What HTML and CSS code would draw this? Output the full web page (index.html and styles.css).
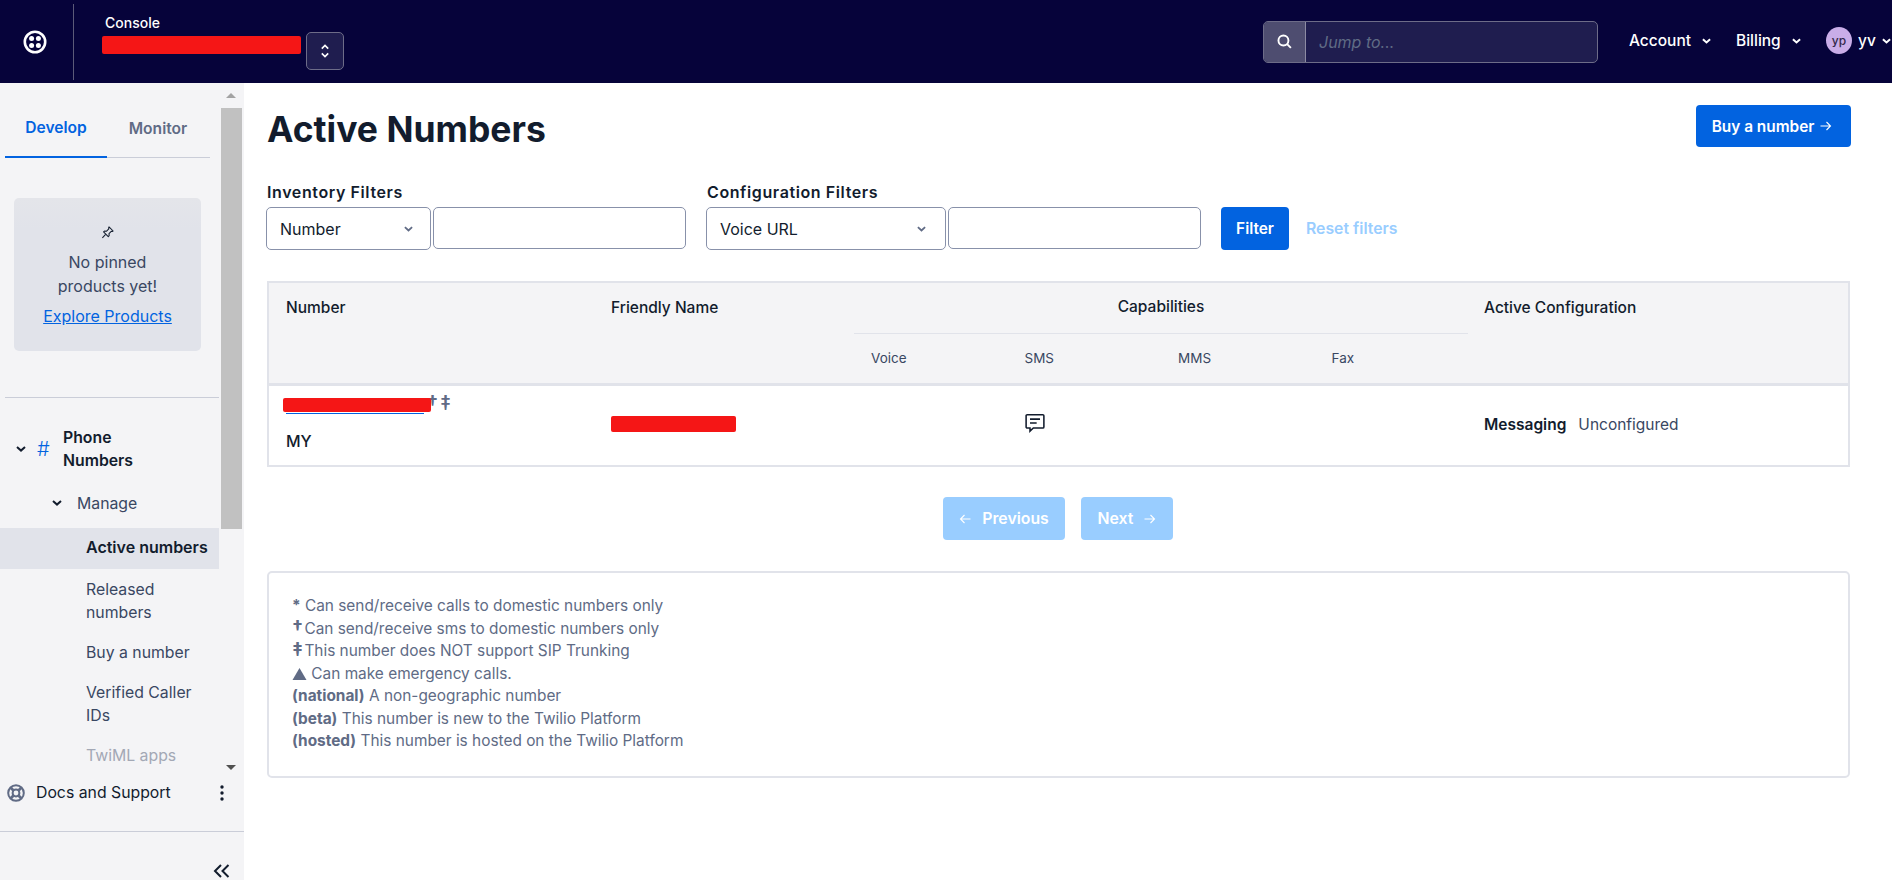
FILE: index.html
```html
<!DOCTYPE html>
<html lang="en">
<head>
<meta charset="utf-8">
<title>Active Numbers</title>
<link rel="stylesheet" href="styles.css">
</head>
<body>
<header class="topbar">
  <div class="logo-cell">
    <svg class="logo" viewBox="0 0 24 24" width="24" height="24"><circle cx="12" cy="12" r="10.2" fill="none" stroke="#fff" stroke-width="2.6"/><circle cx="8.6" cy="8.6" r="2.5" fill="#fff"/><circle cx="15.4" cy="8.6" r="2.5" fill="#fff"/><circle cx="8.6" cy="15.4" r="2.5" fill="#fff"/><circle cx="15.4" cy="15.4" r="2.5" fill="#fff"/></svg>
  </div>
  <div class="account-cell">
    <div class="console-label">Console</div>
    <div class="account-name"><span class="redact redact-account"></span></div>
  </div>
  <button class="switcher"><svg viewBox="0 0 12 20" width="10" height="16"><path d="M2 7l4-4 4 4M2 13l4 4 4-4" fill="none" stroke="#fff" stroke-width="2"/></svg></button>
  <div class="spacer"></div>
  <div class="search">
    <div class="search-icon"><svg viewBox="0 0 16 16" width="17" height="17"><circle cx="7" cy="7" r="4.7" fill="none" stroke="#fff" stroke-width="1.800"/><path d="M10.500 10.500l3.500 3.500" stroke="#fff" stroke-width="1.800"/></svg></div>
    <div class="search-input">Jump to...</div>
  </div>
  <nav class="topnav">
    <span class="topnav-item topnav-account">Account<svg class="chev" viewBox="0 0 10 6" width="9" height="6"><path d="M1 1l4 3.600L9 1" fill="none" stroke="#fff" stroke-width="2.200"/></svg></span>
    <span class="topnav-item topnav-billing">Billing<svg class="chev" viewBox="0 0 10 6" width="9" height="6"><path d="M1 1l4 3.600L9 1" fill="none" stroke="#fff" stroke-width="2.200"/></svg></span>
    <span class="topnav-item topnav-user"><span class="avatar">yp</span>yv<svg class="chev chev-user" viewBox="0 0 10 6" width="9" height="6"><path d="M1 1l4 3.600L9 1" fill="none" stroke="#fff" stroke-width="2.200"/></svg></span>
  </nav>
</header>
<div class="shell">
  <aside class="sidebar">
    <div class="side-scroll">
      <div class="side-content">
        <div class="tabs">
          <div class="tab tab-active">Develop</div>
          <div class="tab">Monitor</div>
        </div>
        <div class="pinned">
          <svg class="pin" viewBox="0 0 16 16" width="15" height="15"><path d="M9.600 2l4.400 4.400-1 .6-1-.2-2.400 2.400.2 2.200-1 1L3.800 7.400l1-1 2.200.2L9.400 4.200l-.2-1z" fill="none" stroke="#121c2d" stroke-width="1.100" stroke-linejoin="round"/><path d="M6 10l-3.500 3.700" stroke="#121c2d" stroke-width="1.100"/></svg>
          <div class="pinned-text">No pinned<br>products yet!</div>
          <a class="pinned-link">Explore Products</a>
        </div>
        <div class="side-rule"></div>
        <div class="product">
          <svg class="chev-dark" viewBox="0 0 10 6" width="10" height="6"><path d="M1 1l4 3.600L9 1" fill="none" stroke="#121c2d" stroke-width="2"/></svg>
          <span class="hash">#</span>
          <span class="product-name">Phone<br>Numbers</span>
        </div>
        <div class="manage">
          <svg class="chev-dark" viewBox="0 0 10 6" width="10" height="6"><path d="M1 1l4 3.600L9 1" fill="none" stroke="#121c2d" stroke-width="2"/></svg>
          <span>Manage</span>
        </div>
        <div class="nav-link nav-active">Active numbers</div>
        <div class="nav-link">Released numbers</div>
        <div class="nav-link">Buy a number</div>
        <div class="nav-link">Verified Caller IDs</div>
        <div class="nav-link nav-fade">TwiML apps</div>
      </div>
      <div class="scrollbar">
        <div class="arrow-up"></div>
        <div class="thumb"></div>
        <div class="track-fill"></div>
        <div class="arrow-down"></div>
      </div>
    </div>
    <div class="docs">
      <svg viewBox="0 0 20 20" width="20" height="20"><circle cx="10" cy="10" r="7.800" fill="none" stroke="#606b85" stroke-width="2"/><circle cx="10" cy="10" r="3.400" fill="none" stroke="#606b85" stroke-width="2"/><path d="M4.500 4.500l3 3M15.500 4.500l-3 3M4.500 15.500l3-3M15.500 15.500l-3-3" stroke="#606b85" stroke-width="2.800"/></svg>
      <span class="docs-label">Docs and Support</span>
      <svg class="kebab" viewBox="0 0 4 16" width="4" height="16"><circle cx="2" cy="2" r="1.700" fill="#121c2d"/><circle cx="2" cy="8" r="1.700" fill="#121c2d"/><circle cx="2" cy="14" r="1.700" fill="#121c2d"/></svg>
    </div>
    <div class="collapse">
      <svg viewBox="0 0 18 14" width="18" height="14"><path d="M8 1L2 7l6 6M15.500 1l-6 6 6 6" fill="none" stroke="#121c2d" stroke-width="2"/></svg>
    </div>
  </aside>
  <main class="main">
    <div class="page-head">
      <h1 class="title">Active Numbers</h1>
      <button class="btn btn-buy">Buy a number<svg class="arrow-r" viewBox="0 0 12 10" width="12" height="10"><path d="M0.500 5h10M6.500 1l4 4-4 4" fill="none" stroke="#fff" stroke-width="1.100"/></svg></button>
    </div>
    <div class="filters">
      <div class="filter-group">
        <div class="filter-label">Inventory Filters</div>
        <div class="filter-controls">
          <div class="select select-inv">Number<svg viewBox="0 0 10 6" width="9" height="6"><path d="M1 1l4 3.600L9 1" fill="none" stroke="#606b85" stroke-width="2"/></svg></div>
          <div class="input input-inv"></div>
        </div>
      </div>
      <div class="filter-group">
        <div class="filter-label">Configuration Filters</div>
        <div class="filter-controls">
          <div class="select select-conf">Voice URL<svg viewBox="0 0 10 6" width="9" height="6"><path d="M1 1l4 3.600L9 1" fill="none" stroke="#606b85" stroke-width="2"/></svg></div>
          <div class="input input-conf"></div>
        </div>
      </div>
      <button class="btn btn-filter">Filter</button>
      <span class="reset">Reset filters</span>
    </div>
    <table class="numbers">
      <colgroup>
        <col class="c-number"><col class="c-friendly"><col class="c-cap"><col class="c-cap"><col class="c-cap"><col class="c-cap"><col>
      </colgroup>
      <thead>
        <tr class="head-top">
          <th rowspan="2" class="th-main th-number">Number</th>
          <th rowspan="2" class="th-main">Friendly Name</th>
          <th colspan="4" class="th-cap">Capabilities</th>
          <th rowspan="2" class="th-main th-config">Active Configuration</th>
        </tr>
        <tr class="head-sub">
          <th>Voice</th><th>SMS</th><th>MMS</th><th>Fax</th>
        </tr>
      </thead>
      <tbody>
        <tr class="row">
          <td class="td-number">
            <div class="num-line"><a class="num-link"><span class="redact redact-number"></span></a><span class="marks">†</span><span class="marks">‡</span></div>
            <div class="country">MY</div>
          </td>
          <td><span class="redact redact-friendly"></span></td>
          <td></td>
          <td class="td-sms"><svg viewBox="1 2.500 18 17" width="20" height="20"><path d="M3 3.500h14a1 1 0 0 1 1 1v10a1 1 0 0 1-1 1h-8.500l-3 2.800v-2.800H3a1 1 0 0 1-1-1v-10a1 1 0 0 1 1-1z" fill="none" stroke="#121c2d" stroke-width="1.400"/><path d="M5.500 7.500h9M5.500 11h6" stroke="#121c2d" stroke-width="1.400"/></svg></td>
          <td></td>
          <td></td>
          <td class="td-config"><strong>Messaging</strong><span class="unconf">Unconfigured</span></td>
        </tr>
      </tbody>
    </table>
    <div class="pager">
      <button class="btn btn-page btn-prev"><svg viewBox="0 0 12 10" width="12" height="10"><path d="M11.500 5h-10M5.500 1l-4 4 4 4" fill="none" stroke="#fff" stroke-width="1.100"/></svg>Previous</button>
      <button class="btn btn-page btn-next">Next<svg viewBox="0 0 12 10" width="12" height="10"><path d="M0.500 5h10M6.500 1l4 4-4 4" fill="none" stroke="#fff" stroke-width="1.100"/></svg></button>
    </div>
    <section class="notes">
      <div><b>*</b> Can send/receive calls to domestic numbers only</div>
      <div><b class="mark">†</b> Can send/receive sms to domestic numbers only</div>
      <div><b class="mark">‡</b> This number does NOT support SIP Trunking</div>
      <div><svg class="tri" viewBox="0 0 14 12" width="15" height="12"><path d="M7 0l7 12H0z" fill="#606b85"/></svg> Can make emergency calls.</div>
      <div><b>(national)</b> A non-geographic number</div>
      <div><b>(beta)</b> This number is new to the Twilio Platform</div>
      <div><b>(hosted)</b> This number is hosted on the Twilio Platform</div>
    </section>
  </main>
</div>
</body>
</html>
```
FILE: styles.css
```css
* { box-sizing: border-box; }
html, body { margin: 0; height: 100%; overflow: hidden; }
body { font-family: Inter, "Liberation Sans", sans-serif; color: #121c2d; background: #fff; font-size: 16px; }
button { font-family: inherit; }

.redact { display: block; background: #f51616; border-radius: 2px; }

.topbar { height: 83px; background: #06033a; display: flex; align-items: center; color: #fff; overflow: hidden; }
.logo-cell { width: 74px; height: 76px; flex: none; display: flex; align-items: center; padding-left: 23px; border-right: 1px solid #5b5a78; }
.account-cell { width: 232px; flex: none; padding-left: 31px; align-self: stretch; padding-top: 14px; }
.console-label { font-size: 14px; font-weight: 500; line-height: 17px; }
.account-name { margin-top: 5px; margin-left: -3px; }
.redact-account { width: 199px; height: 18px; }
.switcher { width: 38px; height: 38px; margin-top: 19px; flex: none; background: #1f1d4f; border: 1px solid #6d6c88; border-radius: 5px; display: flex; align-items: center; justify-content: center; padding: 0; }
.spacer { flex: 1; }
.search { width: 335px; height: 42px; display: flex; border: 1px solid #6d6c88; border-radius: 5px; background: #1f1d4f; overflow: hidden; margin-right: -1px; }
.search-icon { width: 42px; background: #4e4d70; border-right: 1px solid #8c8ba3; display: flex; align-items: center; justify-content: center; flex: none; }
.search-input { padding-left: 13px; font-style: italic; font-size: 16px; color: #606b85; line-height: 40px; }
.topnav { width: 295px; flex: none; display: flex; align-items: center; margin-top: -3px; padding-left: 32px; font-size: 15.500px; font-weight: 500; white-space: nowrap; }
.topnav-item { display: flex; align-items: center; }
.chev { margin-left: 11px; margin-top: 2px; flex: none; }
.topnav-account { width: 107px; }
.topnav-billing { width: 90px; }
.avatar { width: 26px; height: 27px; border-radius: 50%; background: #c9ade8; color: #32284a; font-size: 12px; font-weight: 500; display: flex; align-items: center; justify-content: center; margin-right: 6px; }
.chev-user { margin-left: 6px; }

.shell { display: flex; height: 797px; }
.sidebar { width: 244px; flex: none; background: #f4f4f6; display: flex; flex-direction: column; }
.side-scroll { height: 699px; display: flex; flex: none; overflow: hidden; }
.side-content { width: 219px; flex: none; overflow: hidden; }
.tabs { display: flex; margin: 18px 9px 0 5px; border-bottom: 1px solid #cacdd8; height: 57px; }
.tab { width: 102px; height: 57px; display: flex; align-items: center; justify-content: center; font-size: 15.600px; font-weight: 600; color: #606b85; padding-bottom: 2px; }
.tab-active { color: #0263e0; border-bottom: 2px solid #0263e0; }
.pinned { width: 187px; height: 153px; margin: 40px 0 0 14px; border-radius: 5px; display: flex; flex-direction: column; align-items: center; padding-top: 27px; font-size: 16px; line-height: 24px; color: #394762; background: linear-gradient(#e4e5ea, #e1e3ea 20%); }
.pinned-text { text-align: center; margin-top: 10px; }
.pinned-link { color: #0263e0; text-decoration: underline; margin-top: 6px; }
.side-rule { height: 1px; background: #cacdd8; margin: 46px 0 0 5px; }
.product { display: flex; align-items: center; margin-top: 28px; padding-left: 16px; font-weight: 600; font-size: 15.800px; line-height: 23px; color: #121c2d; }
.hash { color: #0263e0; font-size: 20px; font-weight: 300; margin-left: 11px; width: 26px; }
.manage { display: flex; align-items: center; padding-left: 52px; height: 24px; margin-top: 19px; color: #394762; font-size: 15.800px; }
.manage span { margin-left: 15px; }
.nav-link { padding: 8.500px 5px 8.500px 86px; line-height: 23px; color: #394762; font-size: 15.800px; }
.manage + .nav-link { margin-top: 13px; }
.nav-active { background: #e1e3ea; color: #121c2d; font-weight: 600; font-size: 16px; height: 41px; padding-right: 0; white-space: nowrap; padding-top: 8px; }
.nav-fade { color: #a3a8b5; }
.scrollbar { width: 21px; margin-left: 2px; flex: none; display: flex; flex-direction: column; align-items: center; background: #f4f4f6; }
.arrow-up { height: 25px; flex: none; width: 21px; position: relative; }
.arrow-up::before { content: ""; position: absolute; left: 5px; top: 10px; border: 5.500px solid transparent; border-top: 0; border-bottom: 5px solid #a3a3a3; }
.thumb { width: 21px; height: 421px; background: #c1c1c1; flex: none; }
.track-fill { flex: 1; }
.arrow-down { height: 25px; width: 21px; flex: none; position: relative; }
.arrow-down::before { content: ""; position: absolute; left: 5px; top: 8px; border: 5.500px solid transparent; border-bottom: 0; border-top: 5px solid #505050; }
.docs { height: 50px; display: flex; align-items: center; padding: 0 0 28px 6px; border-bottom: 1px solid #cacdd8; flex: none; font-size: 15.800px; }
.docs-label { margin-left: 10px; flex: 1; }
.kebab { margin-right: 20px; }
.collapse { display: flex; justify-content: flex-end; padding: 32px 13px 0 0; }

.main { flex: 1; padding: 0 42px 0 23px; min-width: 0; }
.page-head { display: flex; justify-content: space-between; align-items: center; height: 48px; margin-top: 23px; }
.title { margin: 0; font-size: 35.500px; font-weight: 700; line-height: 48px; color: #121c2d; }
.btn { border: 0; border-radius: 4px; background: #0263e0; color: #fff; font-weight: 600; font-size: 15.400px; padding: 0; display: flex; align-items: center; justify-content: center; gap: 6px; }
.btn-buy { width: 155px; height: 42px; margin-top: -8px; margin-right: -1px; padding-right: 3px; }
.filters { display: flex; align-items: flex-end; margin-top: 27px; margin-left: -1px; }
.filter-group { margin-right: 21px; }
.filter-group:nth-child(2) { margin-right: 20px; }
.filter-group:first-child { margin-right: 20px; }
.filter-label { font-size: 16px; font-weight: 600; letter-spacing: .6px; line-height: 22px; margin-bottom: 4px; margin-left: 1px; }
.filter-controls { display: flex; gap: 2px; align-items: flex-start; }
.select { height: 43px; border: 1px solid #8891aa; border-radius: 5px; display: flex; align-items: center; justify-content: space-between; padding: 0 13px; font-size: 16px; color: #121c2d; }
.select-inv { width: 165px; padding-right: 17px; }
.select-conf { width: 240px; padding-right: 19px; }
.input { height: 42px; border: 1px solid #8891aa; border-radius: 5px; }
.input-inv { width: 253px; }
.input-conf { width: 253px; }
.btn-filter { width: 68px; height: 43px; }
.reset { margin-left: 17px; color: #99cdff; font-weight: 600; font-size: 15.800px; line-height: 43px; }

.numbers { width: 1583px; margin-top: 31px; border-collapse: collapse; table-layout: fixed; border: 2px solid #e1e3ea; font-size: 15.500px; }
.c-number { width: 329px; }
.c-friendly { width: 257px; }
.c-cap { width: 153.500px; }
.numbers thead { background: #f4f4f6; border-bottom: 3px solid #e1e3ea; }
.numbers th { font-weight: 500; text-align: left; }
.th-main { vertical-align: top; padding: 13px 0 0 14px; line-height: 23px; }
.numbers th.th-number { padding-left: 17px; }
.numbers th.th-config { padding-left: 16px; }
.numbers th.th-cap { text-align: center; height: 51px; border-bottom: 1px solid #e1e3ea; padding-bottom: 4px; }
.head-sub th { height: 51px; }
.numbers .head-sub th { font-weight: 400; font-size: 13.500px; padding-left: 17px; color: #394762; }
.row { height: 82px; }
.numbers td { vertical-align: middle; padding: 0 0 0 14px; }
.numbers td.td-number { vertical-align: top; padding-left: 14px; }
.num-line { display: flex; align-items: flex-start; margin-top: 12px; height: 20px; }
.num-link { display: block; border-bottom: 1px solid #0263e0; width: 138px; margin-left: 3px; height: 16px; margin-right: 3px; }
.redact-number { width: 148px; height: 14px; margin: 0 0 0 -3px; position: relative; }
.marks { color: #606b85; font-weight: 600; font-size: 20px; line-height: 18px; margin: -4px 0 0 0; width: 13px; }
.country { margin: 11px 0 0 3px; font-weight: 500; font-size: 16px; line-height: 24px; }
.redact-friendly { width: 125px; height: 16px; margin-top: -2px; }
.td-sms svg { display: block; margin: -5px 0 0 0; }
.numbers td.td-sms { padding-left: 17px; }
.numbers td.td-config { padding: 0 0 2px 16px; }
.td-config strong { font-weight: 600; }
.unconf { margin-left: 12px; color: #394762; }
.pager { display: flex; gap: 16px; margin: 30px 0 0 676px; }
.btn-page { height: 43px; background: #99cdff; font-size: 15.800px; }
.btn-prev { width: 122px; gap: 11px; }
.btn-next { width: 92px; gap: 11px; }
.notes { width: 1583px; height: 207px; margin-top: 31px; border: 2px solid #e1e3ea; border-radius: 5px; padding: 22px 23px; font-size: 15.400px; line-height: 22.500px; color: #606b85; }
.notes b { font-weight: 700; }
.notes b.mark { font-size: 19px; line-height: 0; margin-right: -3px; }
.tri { vertical-align: -1px; }
```
